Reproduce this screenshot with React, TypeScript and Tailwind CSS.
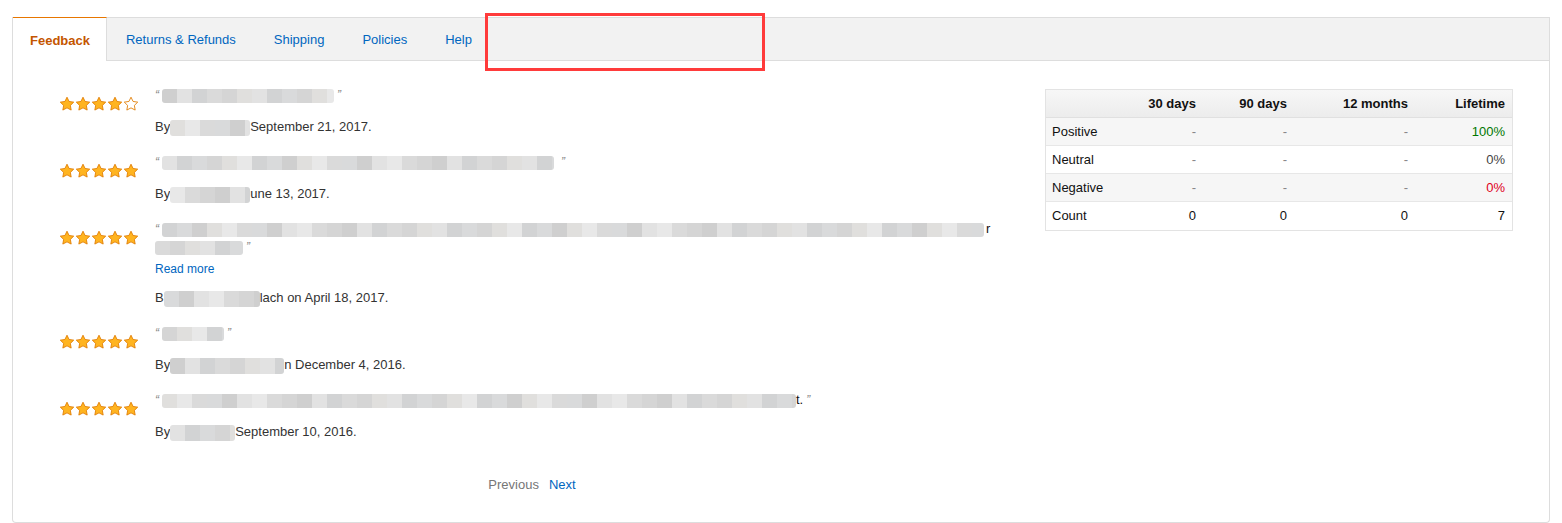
import React from 'react';

const grays = [
  'bg-[#d5d5d5]',
  'bg-[#e2e2e2]',
  'bg-[#dadada]',
  'bg-[#cfcfcf]',
  'bg-[#e8e8e8]',
  'bg-[#d9dadb]',
  'bg-[#e0dfdd]',
  'bg-[#d2d3d4]',
];

function Blur({ width, seed = 0, height = 'h-[14px]' }: { width: number; seed?: number; height?: string }) {
  const cells = Math.ceil(width / 15);
  return (
    <span className={`inline-flex align-middle overflow-hidden rounded-[3px] ${height}`} style={{ width }}>
      {Array.from({ length: cells }).map((_, i) => (
        <span key={i} className={`h-full w-[15px] shrink-0 ${grays[(i * 5 + seed * 3 + (i % 3)) % grays.length]}`} />
      ))}
    </span>
  );
}

function Star({ filled }: { filled: boolean }) {
  return (
    <svg width="16" height="16" viewBox="0 0 24 24" className="shrink-0">
      <path
        d="M12 1.8l3.1 6.4 7 1-5.05 4.9 1.2 7L12 17.8l-6.25 3.3 1.2-7L1.9 9.2l7-1L12 1.8z"
        fill={filled ? '#ffb420' : '#ffffff'}
        stroke="#e07b00"
        strokeWidth="1.3"
        strokeLinejoin="round"
      />
    </svg>
  );
}

function Stars({ count }: { count: number }) {
  return (
    <div className="flex">
      {[0, 1, 2, 3, 4].map((i) => (
        <Star key={i} filled={i < count} />
      ))}
    </div>
  );
}

interface Review {
  stars: number;
  quote: React.ReactNode;
  by: React.ReactNode;
  readMore?: boolean;
}

const Open = () => <span className="text-[#888] text-[12px] italic align-top mr-[3px]">“</span>;
const Close = () => <span className="text-[#888] text-[12px] italic align-top ml-[3px]">”</span>;

const reviews: Review[] = [
  {
    stars: 4,
    quote: (
      <>
        <Open />
        <Blur width={172} seed={1} />
        <Close />
      </>
    ),
    by: (
      <>
        By<Blur width={80} seed={2} height="h-[16px]" />September 21, 2017.
      </>
    ),
  },
  {
    stars: 5,
    quote: (
      <>
        <Open />
        <Blur width={392} seed={3} />
        <span className="ml-[4px]" />
        <Close />
      </>
    ),
    by: (
      <>
        By<Blur width={80} seed={4} height="h-[16px]" />une 13, 2017.
      </>
    ),
  },
  {
    stars: 5,
    readMore: true,
    quote: (
      <>
        <Open />
        <Blur width={822} seed={5} />
        <span className="ml-[2px]">r</span>
        <br />
        <Blur width={88} seed={6} />
        <Close />
      </>
    ),
    by: (
      <>
        B<Blur width={96} seed={7} height="h-[16px]" />lach on April 18, 2017.
      </>
    ),
  },
  {
    stars: 5,
    quote: (
      <>
        <Open />
        <Blur width={62} seed={0} />
        <Close />
      </>
    ),
    by: (
      <>
        By<Blur width={114} seed={1} height="h-[16px]" />n December 4, 2016.
      </>
    ),
  },
  {
    stars: 5,
    quote: (
      <>
        <Open />
        <Blur width={634} seed={2} />
        <span>t.</span>
        <Close />
      </>
    ),
    by: (
      <>
        By<Blur width={65} seed={3} height="h-[16px]" />September 10, 2016.
      </>
    ),
  },
];

const tabs = ['Feedback', 'Returns & Refunds', 'Shipping', 'Policies', 'Help'];

const rows = [
  { label: 'Positive', vals: ['-', '-', '-'], life: '100%', lifeClass: 'text-[#007600]', bg: 'bg-[#f6f6f6]' },
  { label: 'Neutral', vals: ['-', '-', '-'], life: '0%', lifeClass: 'text-[#444]', bg: 'bg-white' },
  { label: 'Negative', vals: ['-', '-', '-'], life: '0%', lifeClass: 'text-[#e0001b]', bg: 'bg-[#f6f6f6]' },
  { label: 'Count', vals: ['0', '0', '0'], life: '7', lifeClass: 'text-[#111]', bg: 'bg-white' },
];

export default function App() {
  return (
    <div className="relative w-[1562px] h-[523px] bg-white font-[Liberation_Sans,Arial,sans-serif] text-[13px] text-[#333] overflow-hidden">
      <div className="ml-[12px] mt-[17px] w-[1538px] h-[506px] border-x border-b border-[#dddddd] rounded-b-[4px] flex flex-col">
        {/* tabs */}
        <div className="flex items-stretch h-[44px] bg-[#f2f2f2] border-y border-[#dddddd]">
          {tabs.map((t, i) =>
            i === 0 ? (
              <div
                key={t}
                className="-mt-px -mb-px flex items-center pt-[2px] pl-[17px] pr-[16px] bg-white border-t border-t-[#e77600] border-r border-r-[#dddddd] font-bold text-[#c45500]"
              >
                {t}
              </div>
            ) : (
              <div key={t} className="flex items-center pt-[2px] px-[19px] text-[#0066c0]">
                {t}
              </div>
            )
          )}
        </div>

        <div className="flex flex-1">
          {/* reviews */}
          <div className="flex-1 flex flex-col pt-[25px]">
            {reviews.map((r, i) => (
              <div key={i} className="flex mb-[17px]">
                <div className="w-[142px] pl-[46px] pt-[10px] shrink-0">
                  <Stars count={r.stars} />
                </div>
                <div className="flex flex-col text-[#111]">
                  <div className="leading-[18px] whitespace-nowrap">{r.quote}</div>
                  {r.readMore && (
                    <div className="mt-[4px] text-[12px] leading-[18px] text-[#0066c0]">Read more</div>
                  )}
                  <div className={`${r.readMore ? 'mt-[11px]' : 'mt-[14px]'} leading-[18px] text-[#333] whitespace-nowrap`}>
                    {r.by}
                  </div>
                </div>
              </div>
            ))}
            <div className="mt-[18px] pl-[6px] text-center leading-[18px]">
              <span className="text-[#767676]">Previous</span>
              <span className="ml-[10px] text-[#0066c0]">Next</span>
            </div>
          </div>

          {/* table */}
          <div className="w-[468px] mt-[28px] mr-[36px] self-start border border-[#e3e3e3]">
            <div className="grid grid-cols-[80px_77px_91px_121px_1fr] h-[28px] items-center font-bold text-[#111] bg-gradient-to-b from-[#f7f7f7] to-[#ececec] border-b border-[#e0e0e0]">
              <div />
              <div className="text-right pr-[7px]">30 days</div>
              <div className="text-right pr-[7px]">90 days</div>
              <div className="text-right pr-[7px]">12 months</div>
              <div className="text-right pr-[7px]">Lifetime</div>
            </div>
            {rows.map((row, i) => (
              <div
                key={row.label}
                className={`grid grid-cols-[80px_77px_91px_121px_1fr] h-[28px] items-center ${row.bg} ${
                  i < rows.length - 1 ? 'border-b border-[#e7e7e7]' : ''
                }`}
              >
                <div className="pl-[6px] text-[#111]">{row.label}</div>
                {row.vals.map((v, j) => (
                  <div key={j} className={`text-right pr-[7px] ${v === '-' ? 'text-[#888]' : 'text-[#111]'}`}>
                    {v}
                  </div>
                ))}
                <div className={`text-right pr-[7px] ${row.lifeClass}`}>{row.life}</div>
              </div>
            ))}
          </div>
        </div>
      </div>

      {/* annotation box */}
      <div className="absolute left-[485px] top-[13px] w-[280px] h-[58px] border-[3px] border-[#ff3b3b]" />
    </div>
  );
}
